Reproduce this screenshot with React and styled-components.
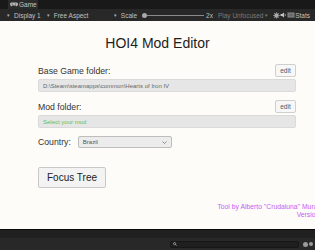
import React from "react";
import styled, { createGlobalStyle } from "styled-components";

const GlobalStyle = createGlobalStyle`
  html, body {
    margin: 0;
    padding: 0;
    overflow: hidden;
    background: #1e1e1e;
  }
  * { box-sizing: border-box; }
`;

function GamepadIcon() {
  return (
    <svg width="8" height="5" viewBox="0 0 8 5">
      <path d="M1.5 0.5h5a1.5 1.5 0 0 1 1.3 2.2L7 4.5 5.5 3.5h-3L1 4.5 0.2 2.7A1.5 1.5 0 0 1 1.5 0.5z" fill="#b8b8b8" />
      <rect x="1.6" y="1.8" width="1.6" height="0.6" fill="#2b2b2b" />
      <circle cx="5.6" cy="2" r="0.5" fill="#2b2b2b" />
    </svg>
  );
}

function BugIcon() {
  return (
    <svg width="7" height="7" viewBox="0 0 7 7">
      <circle cx="3.5" cy="3.5" r="2.2" fill="#aaa" />
      <path d="M3.5 0.3v1.2M3.5 5.5v1.2M0.3 3.5h1.2M5.5 3.5h1.2M1.2 1.2l1 1M5.8 1.2l-1 1M1.2 5.8l1-1M5.8 5.8l-1-1" stroke="#aaa" strokeWidth="0.8" />
    </svg>
  );
}

function SpeakerIcon() {
  return (
    <svg width="7" height="6" viewBox="0 0 7 6">
      <path d="M0.5 2h1.5l2-1.6v5.2L2 4H0.5z" fill="#c4c4c4" />
      <path d="M5 1.8q0.8 1.2 0 2.4" stroke="#c4c4c4" strokeWidth="0.7" fill="none" />
    </svg>
  );
}

function GizmoIcon() {
  return (
    <svg width="8" height="6" viewBox="0 0 8 6">
      <rect x="0.5" y="0.5" width="7" height="5" fill="#888" />
      <rect x="1.5" y="1.5" width="5" height="3" fill="#6a6a6a" />
    </svg>
  );
}

function Chevron() {
  return (
    <svg width="5" height="3" viewBox="0 0 5 3">
      <path d="M0.5 0.5L2.5 2.5 4.5 0.5" stroke="#666" strokeWidth="0.7" fill="none" />
    </svg>
  );
}

export default function App() {
  return (
    <>
      <GlobalStyle />
      <Window>
        <TabBar>
          <Tab>
            <GamepadIcon />
            Game
          </Tab>
        </TabBar>
        <Toolbar>
          <Caret>▾</Caret>
          <ToolText>Display 1</ToolText>
          <Caret>▾</Caret>
          <ToolText>Free Aspect</ToolText>
          <Spacer />
          <Caret>▾</Caret>
          <ToolText>Scale</ToolText>
          <Slider>
            <Knob />
            <Track />
          </Slider>
          <ToolText>2x</ToolText>
          <ToolText dim>Play Unfocused</ToolText>
          <Caret dim>▾</Caret>
          <IconSlot><BugIcon /></IconSlot>
          <IconSlot><SpeakerIcon /></IconSlot>
          <IconSlot><GizmoIcon /></IconSlot>
          <ToolText>Stats</ToolText>
        </Toolbar>

        <Page>
          <Title>HOI4 Mod Editor</Title>

          <FieldHeader>
            <Label>Base Game folder:</Label>
            <SmallButton>edit</SmallButton>
          </FieldHeader>
          <PathBox>D:\Steam\steamapps\common\Hearts of Iron IV</PathBox>

          <FieldHeader spaced>
            <Label>Mod folder:</Label>
            <SmallButton>edit</SmallButton>
          </FieldHeader>
          <PathBox placeholder>Select your mod</PathBox>

          <CountryRow>
            <Label>Country:</Label>
            <Select>
              <span>Brazil</span>
              <Chevron />
            </Select>
          </CountryRow>

          <BigButton>Focus Tree</BigButton>

          <Footer>
            <span>Tool by Alberto "Crudaluna" Murado</span>
            <span>Version 1</span>
          </Footer>
        </Page>

        <BottomBar>
          <Strip />
          <StatusRow>
            <SearchField>
              <svg width="4" height="4" viewBox="0 0 4 4">
                <circle cx="1.6" cy="1.6" r="1.1" stroke="#bbb" strokeWidth="0.7" fill="none" />
                <path d="M2.4 2.4L3.6 3.6" stroke="#bbb" strokeWidth="0.7" />
              </svg>
            </SearchField>
            <StatusIcons>
              <Dot />
              <Dot small />
            </StatusIcons>
          </StatusRow>
        </BottomBar>
      </Window>
    </>
  );
}

const Window = styled.div`
  width: 315px;
  height: 250px;
  display: flex;
  flex-direction: column;
  font-family: "Liberation Sans", Arial, sans-serif;
`;

const TabBar = styled.div`
  height: 9px;
  background: #191919;
  padding-left: 8px;
  display: flex;
`;

const Tab = styled.div`
  width: 30px;
  height: 9px;
  background: #2b2b2b;
  color: #c4c4c4;
  font-size: 6.5px;
  display: flex;
  align-items: center;
  gap: 1px;
  padding-left: 2px;
`;

const Toolbar = styled.div`
  height: 12px;
  background: #282828;
  display: flex;
  align-items: center;
  padding-left: 6px;
  white-space: nowrap;
  overflow: hidden;
`;

const Caret = styled.span`
  font-size: 5px;
  color: ${(p) => (p.dim ? "#7a7a7a" : "#b0b0b0")};
  margin: 0 4px 0 1px;
`;

const ToolText = styled.span`
  font-size: 6.5px;
  color: ${(p) => (p.dim ? "#7a7a7a" : "#c0c0c0")};
  margin-right: ${(p) => (p.dim ? "1px" : "5px")};
`;

const Spacer = styled.div`
  width: 29px;
`;

const Slider = styled.div`
  display: flex;
  align-items: center;
  margin: 0 2px 0 0;
`;

const Knob = styled.div`
  width: 5px;
  height: 5px;
  border-radius: 50%;
  background: #a8a8a8;
`;

const Track = styled.div`
  width: 57px;
  height: 1px;
  background: #8a8a8a;
`;

const IconSlot = styled.span`
  display: flex;
  align-items: center;
  justify-content: center;
  width: 11px;
`;

const Page = styled.main`
  flex: 1;
  background: #fdfcf8;
  padding: 14px 19px 0 38px;
  display: flex;
  flex-direction: column;
  color: #333;
`;

const Title = styled.h1`
  margin: 0 -19px 13px -38px;
  font-weight: normal;
  font-size: 14px;
  line-height: 16px;
  color: #1e1e1e;
  text-align: center;
`;

const FieldHeader = styled.div`
  display: flex;
  align-items: center;
  justify-content: space-between;
  height: 13px;
  margin-top: ${(p) => (p.spaced ? "8px" : "0")};
  margin-bottom: 2px;
`;

const Label = styled.span`
  font-size: 8.7px;
  color: #333;
`;

const SmallButton = styled.button`
  width: 21px;
  height: 13px;
  padding: 0;
  font-family: inherit;
  font-size: 6.5px;
  color: #555;
  background: #f7f7f7;
  border: 1px solid #cfcfcf;
  border-radius: 2px;
`;

const PathBox = styled.div`
  height: 13px;
  background: #e6e6e6;
  border: 1px solid #dadada;
  border-radius: 2px;
  padding-left: 4px;
  display: flex;
  align-items: center;
  font-size: 6px;
  color: ${(p) => (p.placeholder ? "#5cbf5c" : "#666")};
`;

const CountryRow = styled.div`
  display: flex;
  align-items: center;
  gap: 7px;
  margin-top: 8px;
`;

const Select = styled.div`
  width: 94px;
  height: 12px;
  background: #ececec;
  border: 1px solid #bdbdbd;
  border-radius: 2px;
  display: flex;
  align-items: center;
  justify-content: space-between;
  padding: 0 4px;
  font-size: 6px;
  color: #555;
`;

const BigButton = styled.button`
  align-self: flex-start;
  margin-top: 19px;
  width: 68px;
  height: 21px;
  padding: 0;
  font-family: inherit;
  font-size: 10px;
  color: #222;
  background: #f3f3f3;
  border: 1px solid #c8c8c8;
  border-radius: 2px;
`;

const Footer = styled.footer`
  margin-top: 15px;
  margin-right: -29px;
  display: flex;
  flex-direction: column;
  align-items: flex-end;
  font-size: 6.8px;
  line-height: 8px;
  color: #c45cf5;
  white-space: nowrap;
`;

const BottomBar = styled.div`
  border-top: 1px solid #0a0a0a;
  display: flex;
  flex-direction: column;
`;

const Strip = styled.div`
  height: 8px;
  background: #202020;
`;

const StatusRow = styled.div`
  height: 12px;
  background: #282828;
  display: flex;
  align-items: center;
  justify-content: flex-end;
  padding-right: 2px;
  gap: 4px;
`;

const SearchField = styled.div`
  width: 129px;
  height: 7px;
  background: #1f1f1f;
  border: 1px solid #161616;
  border-radius: 2px;
  display: flex;
  align-items: center;
  padding-left: 2px;
`;

const StatusIcons = styled.div`
  display: flex;
  gap: 1px;
  align-items: center;
`;

const Dot = styled.div`
  width: ${(p) => (p.small ? "4px" : "5px")};
  height: ${(p) => (p.small ? "4px" : "5px")};
  border-radius: 50%;
  background: #9a9a9a;
`;
